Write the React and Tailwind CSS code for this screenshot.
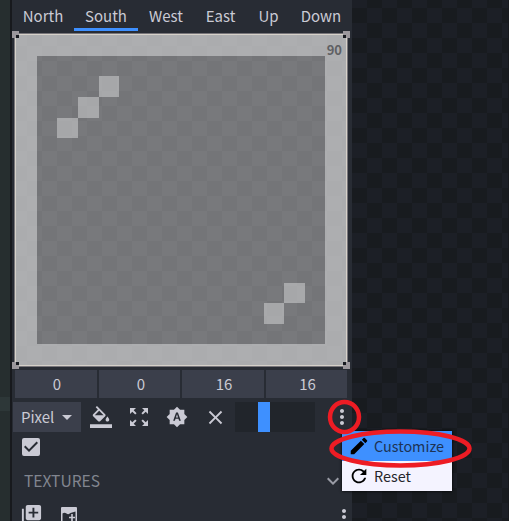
import React from 'react';
import { MdZoomOutMap, MdBrightnessAuto, MdClose, MdMoreVert, MdEdit, MdRefresh, MdCheckBox, MdLibraryAdd, MdExpandMore, MdArrowDropDown } from 'react-icons/md';

const pixels = [
  'left-[84px] top-[42px] w-[20px] h-[21px]',
  'left-[63px] top-[63px] size-[21px]',
  'left-[42px] top-[84px] w-[21px] h-[20px]',
  'left-[269px] top-[249px] w-[21px] h-[20px]',
  'left-[249px] top-[269px] w-[20px] h-[21px]',
];

function Tab({ className, active, children }) {
  return (
    <div className={`h-[31px] shrink-0 pt-[4px] text-center leading-[24px] ${active ? 'border-b-[3px] border-[#3e90ff]' : ''} ${className}`}>
      {children}
    </div>
  );
}

function FillIcon({ className }) {
  return (
    <svg viewBox="0 0 24 24" fill="currentColor" className={className}>
      <path d="M16.56 8.94L7.62 0 6.21 1.41l2.38 2.38-5.15 5.15c-.59.59-.59 1.54 0 2.12l5.5 5.5c.29.29.68.44 1.06.44s.77-.15 1.06-.44l5.5-5.5c.59-.58.59-1.53 0-2.12zM5.21 10L10 5.21 14.79 10H5.21zM19 11.5s-2 2.17-2 3.500c0 1.100.9 2 2 2s2-.9 2-2c0-1.330-2-3.500-2-3.500zM0 20h24v4H0v-4z" />
    </svg>
  );
}

function NewTextureIcon({ className }) {
  return (
    <svg viewBox="0 0 16 20" className={className}>
      <path fill="#cacad4" d="M1 0h14a1 1 0 0 1 1 1v19H0V1a1 1 0 0 1 1-1z" />
      <path fill="#282c34" d="M1.500 6.500q2-1.500 4 0t4-.5L14.500 4.500v15.500h-13z" />
      <path stroke="#cacad4" strokeWidth="1.6" d="M11 7v7M8 10.500h6" />
    </svg>
  );
}

function Canvas() {
  return (
    <div className="relative ml-[2px] mt-[2px] h-[334px] w-[334px] border border-[#77757a] bg-[#abacae]">
      <div className="absolute left-[22px] top-[22px] h-[288px] w-[288px] bg-[#747578]" />
      {pixels.map((p) => (
        <div key={p} className={`absolute bg-[#a6a7a9] ${p}`} />
      ))}
      <div className="absolute inset-0 bg-[conic-gradient(#ffffff07_25%,transparent_0_50%,#ffffff07_0_75%,transparent_0)] bg-[length:30px_30px] bg-[position:-3px_-18px]" />
      <div className="absolute inset-0 border border-[#d6d1c9]" />
      <span className="absolute right-[5px] top-[6px] text-[13px] font-bold leading-[20px] text-[#5f6063]">90</span>
      <i className="absolute -left-[3px] -top-[3px] size-[7px] bg-[#9b979c]" />
      <i className="absolute -right-[3px] -top-[3px] size-[7px] bg-[#9b979c]" />
      <i className="absolute -bottom-[3px] -left-[3px] size-[7px] bg-[#9b979c]" />
      <i className="absolute -bottom-[3px] -right-[3px] size-[7px] bg-[#9b979c]" />
      <i className="absolute left-px top-px size-[3px] bg-[#17191f]" />
      <i className="absolute right-px top-px size-[3px] bg-[#17191f]" />
      <i className="absolute bottom-px left-px size-[3px] bg-[#17191f]" />
      <i className="absolute bottom-px right-px size-[3px] bg-[#17191f]" />
    </div>
  );
}

export default function App() {
  return (
    <div className="relative flex h-[521px] w-[509px] overflow-hidden bg-[#17191d] font-['Noto_Sans_CJK_SC',sans-serif] text-[15px] text-[#cacad4]">
      <div className="w-[10px] bg-[#262e2f] pt-[397px]">
        <div className="h-[14px] bg-[#2d3738]" />
      </div>
      <div className="w-[2px] bg-[#17191d]" />
      <div className="w-[340px] shrink-0 overflow-hidden bg-[#282c34]">
        <div className="flex h-[31px]">
          <Tab className="w-[62px]">North</Tab>
          <Tab active className="w-[64px]">South</Tab>
          <Tab className="w-[56px]">West</Tab>
          <Tab className="w-[53px]">East</Tab>
          <Tab className="w-[43px]">Up</Tab>
          <Tab className="w-[62px]">Down</Tab>
        </div>
        <Canvas />
        <div className="ml-[3px] mt-[3px] flex h-[28px] gap-[2px] text-center leading-[28px]">
          <div className="w-[82px] bg-[#3b3f4b] pl-[2px]">0</div>
          <div className="w-[81px] bg-[#3b3f4b] pl-[3px]">0</div>
          <div className="w-[82px] bg-[#3b3f4b] pl-[2px]">16</div>
          <div className="w-[81px] bg-[#3b3f4b] pl-[2px]">16</div>
        </div>
        <div className="ml-px mt-[4px] flex h-[30px] items-center">
          <div className="flex h-[30px] w-[68px] shrink-0 items-center bg-[#3b3f4b] pl-[8px]">
            <span className="w-[34px]">Pixel</span>
            <MdArrowDropDown className="size-[24px] shrink-0" />
          </div>
          <FillIcon className="ml-[9px] size-[22px] shrink-0" />
          <MdZoomOutMap className="ml-[15px] size-[24px] shrink-0" />
          <MdBrightnessAuto className="ml-[15px] size-[22px] shrink-0" />
          <MdClose className="ml-[16px] size-[23px] shrink-0" />
          <div className="ml-[8px] h-[30px] w-[80px] shrink-0 bg-[#21252b] pl-[23px]">
            <div className="h-[30px] w-[12px] bg-[#3e90ff]" />
          </div>
          <MdMoreVert className="ml-[15px] size-[24px] shrink-0" />
        </div>
        <div className="flex h-[30px] items-center pb-px pl-[7px]">
          <MdCheckBox className="size-[24px]" />
        </div>
        <div className="flex h-[38px] items-center justify-between pb-px pl-[12px] pr-[7px] text-[#81858f]">
          <span className="text-[15.6px]">TEXTURES</span>
          <MdExpandMore className="size-[24px] text-[#9a9ca6]" />
        </div>
        <div className="flex pl-[8px] pt-[3px]">
          <MdLibraryAdd className="size-[23px] shrink-0" />
          <NewTextureIcon className="ml-[18px] mt-[4px] h-[20px] w-[16px] shrink-0" />
          <MdMoreVert className="ml-[255px] mt-[2px] size-[24px] shrink-0" />
        </div>
      </div>
      <div className="w-[156px] bg-[conic-gradient(#1c1f26_25%,#181b1f_0_50%,#1c1f26_0_75%,#181b1f_0)] bg-[length:30px_30px] bg-[position:-15px_-7px]" />
      <div className="absolute left-[342px] top-[431px] w-[110px] text-[15px] shadow-[0_0_3px_#000]">
        <div className="flex h-[30px] items-center bg-[#3e90ff] pl-[6px] text-[#1d3354]">
          <MdEdit className="mr-[4px] size-[22px] shrink-0 text-black" />
          <span className="text-[14.4px]">Customize</span>
        </div>
        <div className="flex h-[30px] items-center bg-[#f4f3ff] pl-[6px] text-[#25262b]">
          <MdRefresh className="mr-[4px] size-[22px] shrink-0 text-black" />
          <span className="text-[14.4px]">Reset</span>
        </div>
      </div>
      <svg className="absolute inset-0" width="509" height="521" fill="none" stroke="#ed1c24" strokeWidth="4.5">
        <ellipse cx="344.500" cy="417" rx="14.500" ry="15" />
        <ellipse cx="400.500" cy="448.500" rx="69" ry="17" />
      </svg>
    </div>
  );
}
